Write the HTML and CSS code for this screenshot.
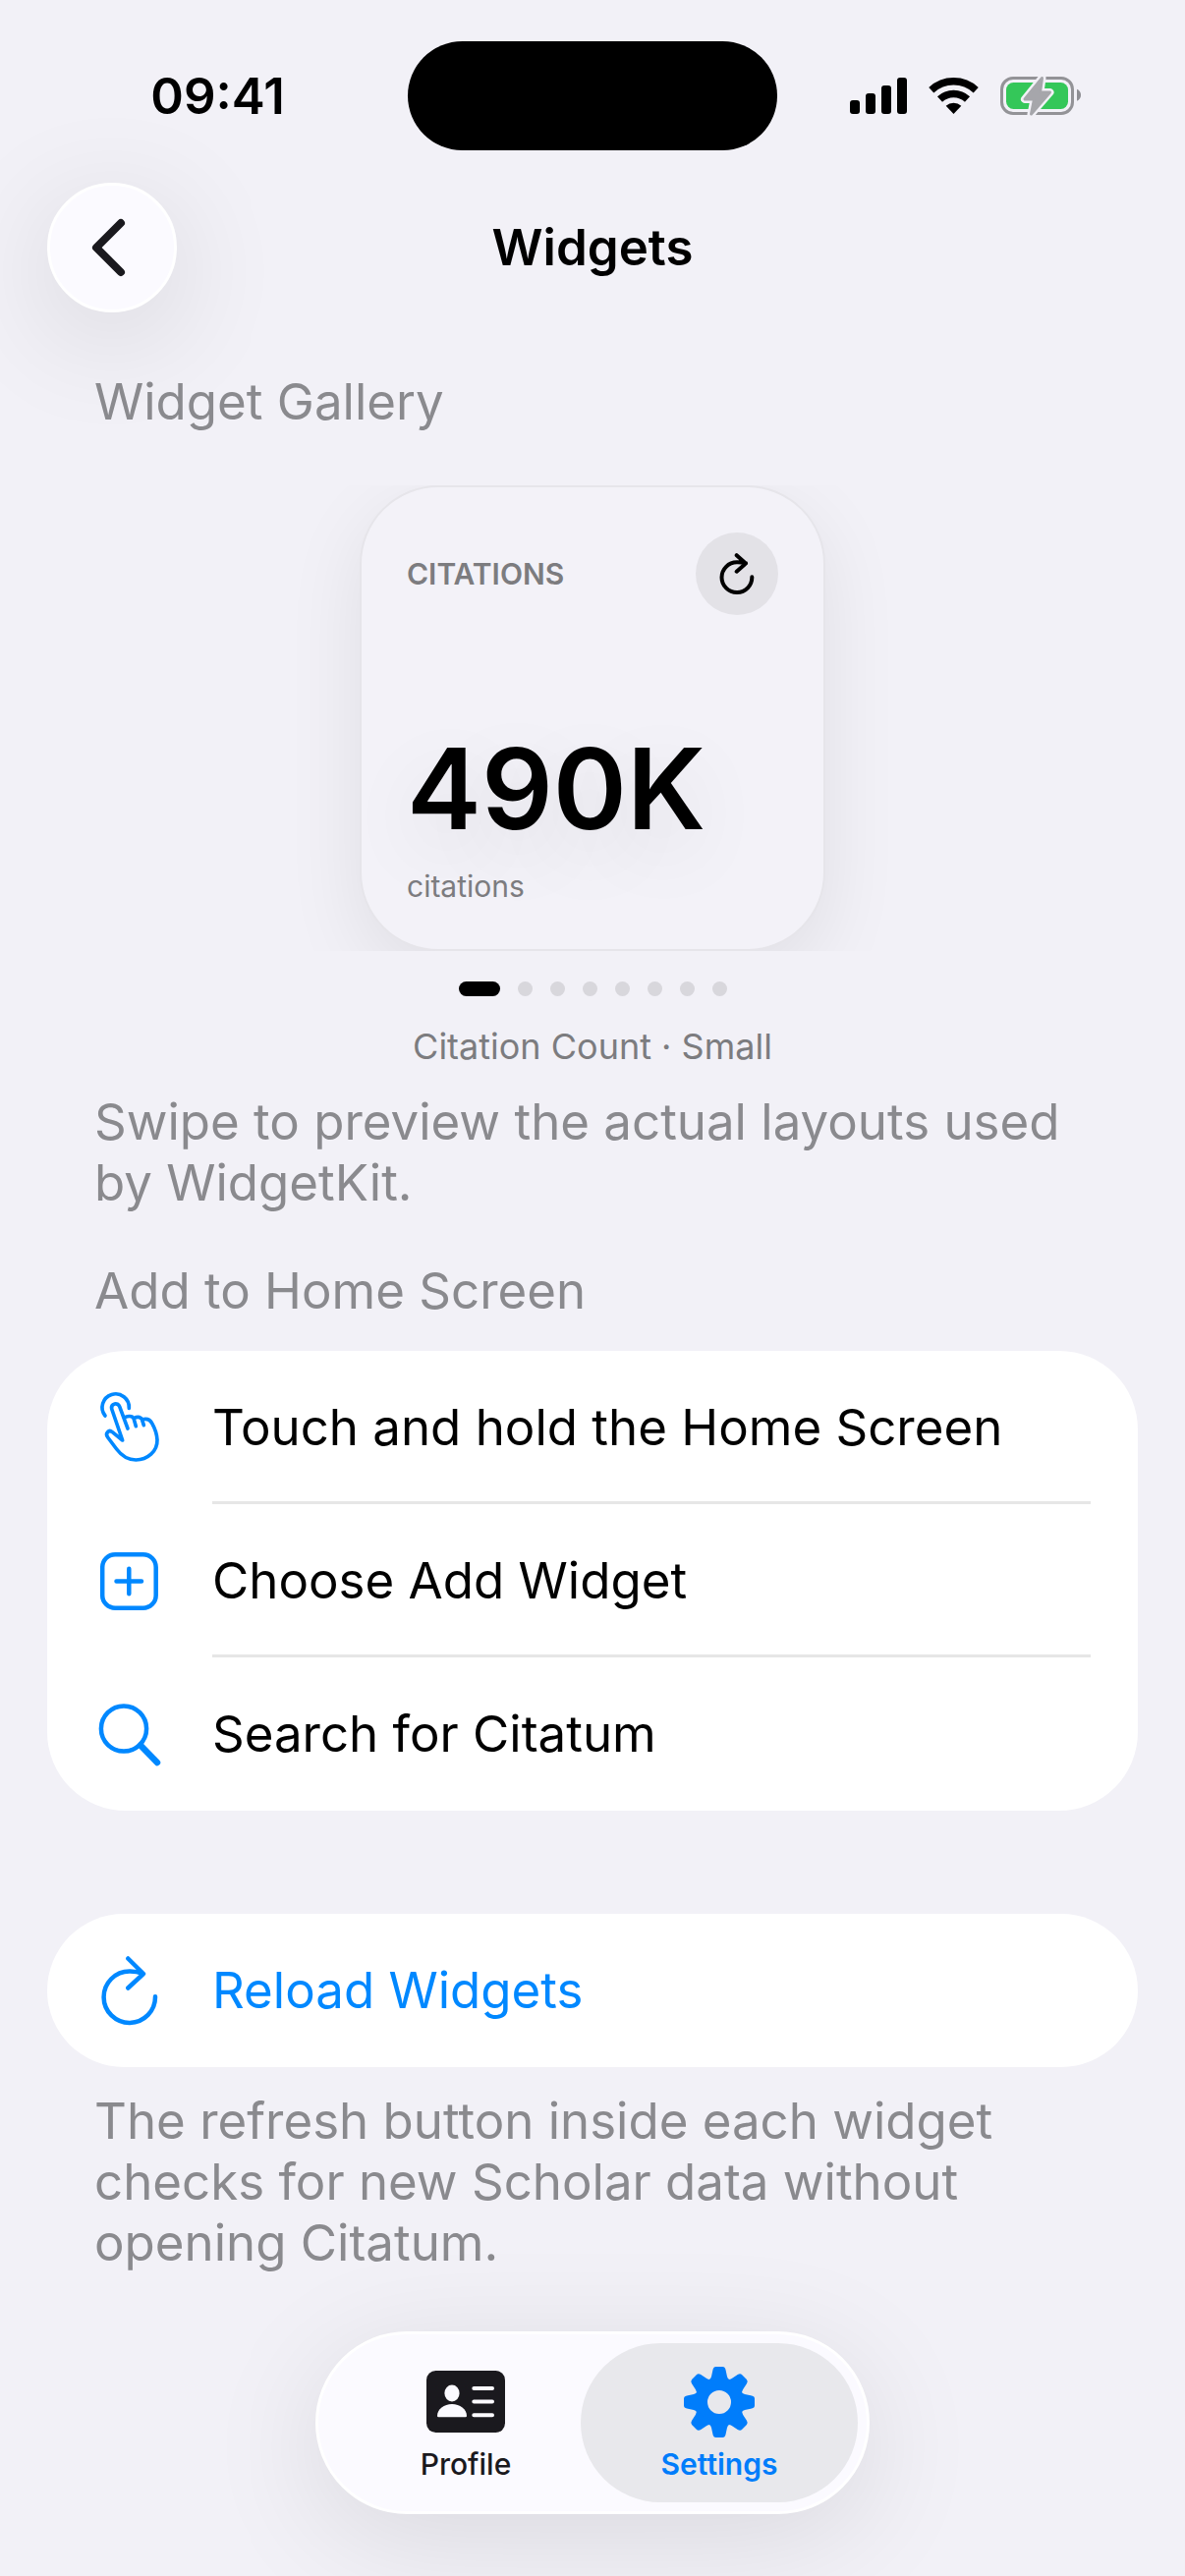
FILE: index.html
```html
<!DOCTYPE html>
<html lang="en">
<head>
  <meta charset="UTF-8">
  <meta name="viewport" content="width=device-width, initial-scale=1.0">
  <title>Widgets</title>
  <link rel="stylesheet" href="styles.css">
</head>
<body>
  <div class="status-bar">
    <div class="time">09:41</div>
    <div class="island"></div>
    <div class="status-icons">
      <svg width="58" height="37" viewBox="0 0 58 37" aria-hidden="true">
        <rect x="0" y="23" width="10" height="14" rx="3"/>
        <rect x="16" y="16" width="10" height="21" rx="3"/>
        <rect x="32" y="8" width="10" height="29" rx="3"/>
        <rect x="48" y="0" width="10" height="37" rx="3"/>
      </svg>
      <svg width="51" height="37" viewBox="0 0 51 37" aria-hidden="true">
        <path d="M2.8 12.7A33.3 33.3 0 0 1 48.2 12.7M11.5 22A20.5 20.5 0 0 1 39.5 22" fill="none" stroke="#000" stroke-width="7.4"/>
        <path d="M25.5 37L17.7 28.8A11.5 11.5 0 0 1 33.3 28.8Z"/>
      </svg>
      <svg width="82" height="42" viewBox="0 0 82 42" aria-hidden="true">
        <rect x="1.5" y="2.5" width="72" height="36" rx="11.5" fill="none" stroke="#939397" stroke-width="3"/>
        <rect x="6" y="7" width="63" height="27" rx="7.5" fill="#34c759"/>
        <path d="M78 13.7Q82 15.5 82 19.7T78 25.7Z" fill="#8e8e93"/>
        <path class="bolt-gap" d="M42.5 2.5L25 24H34.5L31.5 39L50.5 17H40.5Z"/>
        <path class="bolt" d="M42.5 2.5L25 24H34.5L31.5 39L50.5 17H40.5Z"/>
      </svg>
    </div>
  </div>

  <header class="nav-bar">
    <button class="back" type="button" aria-label="Back">
      <svg width="36" height="60" viewBox="0 0 36 60"><path d="M31 5L6 30L31 55"/></svg>
    </button>
    <h1>Widgets</h1>
  </header>

  <main>
    <section>
      <h2>Widget Gallery</h2>
      <div class="gallery">
        <div class="widget">
          <div class="widget-top">
            <span class="widget-title">CITATIONS</span>
            <button class="refresh" type="button" aria-label="Refresh">
              <svg width="84" height="84" viewBox="0 0 84 84">
                <path d="M57.3 45.3A15.4 15.4 0 1 1 42 30.3Q46 30.2 51 31.3M41.7 23.2L51 31.5L41.7 39.7"/>
              </svg>
            </button>
          </div>
          <div class="widget-count">490K</div>
          <div class="widget-label">citations</div>
        </div>
      </div>
      <div class="dots">
        <span class="dot active"></span>
        <span class="dot"></span>
        <span class="dot"></span>
        <span class="dot"></span>
        <span class="dot"></span>
        <span class="dot"></span>
        <span class="dot"></span>
        <span class="dot"></span>
      </div>
      <p class="caption">Citation Count · Small</p>
      <p class="note">Swipe to preview the actual layouts used by WidgetKit.</p>
    </section>

    <section class="steps">
      <h2>Add to Home Screen</h2>
      <ul class="card">
        <li class="row">
          <svg class="icon" viewBox="6 27 234 234" aria-hidden="true">
            <g stroke-width="11">
              <path d="M51 108A41 41 0 1 1 124 85"/>
              <path d="M120 147L95 80C90 66 68 70 71 87L104 183L73 158C62 149 50 162 59 174L86 210C104 234 124 243 145 243C180 243 211 217 210 182C209 164 203 147 194 131C188 119 177 116 165 119"/>
              <path d="M111 113C127 106 137 110 139 119L145 140M139 116C152 109 162 113 164 121L169 137"/>
            </g>
          </svg>
          <span class="row-text">Touch and hold the Home Screen</span>
        </li>
        <li class="row">
          <svg class="icon" viewBox="0 0 78 78" aria-hidden="true">
            <rect x="12.2" y="12.2" width="54.5" height="54.5" rx="13" stroke-width="4.5"/>
            <path d="M26.5 39.5H52M39.3 26.8V52.3" stroke-width="4.5"/>
          </svg>
          <span class="row-text">Choose Add Widget</span>
        </li>
        <li class="row">
          <svg class="icon" viewBox="0 0 78 78" aria-hidden="true">
            <circle cx="34" cy="33.5" r="23.1" stroke-width="4.5"/>
            <path d="M51 50.5L68 68" stroke-width="6.5"/>
          </svg>
          <span class="row-text">Search for Citatum</span>
        </li>
      </ul>
    </section>

    <section class="reload">
      <div class="card">
        <button class="row reload-button" type="button">
          <svg class="icon" viewBox="0 0 78 78" aria-hidden="true">
            <path d="M66 45.2A26.2 26.2 0 1 1 39.8 19.5Q47 19.4 53.5 22M38.3 6.5L54 22L38.3 36.5" stroke-width="4.5"/>
          </svg>
          <span class="row-text">Reload Widgets</span>
        </button>
      </div>
      <p class="note">The refresh button inside each widget checks for new Scholar data without opening Citatum.</p>
    </section>
  </main>

  <nav class="tab-bar">
    <a class="tab" href="#profile">
      <svg width="80" height="72" viewBox="0 -4 80 72" aria-hidden="true">
        <rect width="80" height="63" rx="9.5" fill="#1a191e"/>
        <g fill="#fbfaff">
          <ellipse cx="26" cy="23" rx="7.6" ry="8.5"/>
          <path d="M11 46C11 39 18 34 26 34S41 39 41 46Q41 47.3 39.7 47.3H12.3Q11 47.3 11 46Z"/>
        </g>
        <path d="M48.3 18H67M48.3 31.5H67M48.3 45.3H67" stroke="#fbfaff" stroke-width="4" stroke-linecap="round"/>
      </svg>
      <span>Profile</span>
    </a>
    <a class="tab current" href="#settings" aria-current="page">
      <svg width="72" height="72" viewBox="0 0 72 72" fill="currentColor" aria-hidden="true">
        <defs>
          <path id="tooth" d="M25 14Q27.5 12.5 28 10L29.5 3Q30.2 0 32.5 0H39.5Q41.8 0 42.5 3L44 10Q44.5 12.5 47 14Z"/>
        </defs>
        <circle cx="36" cy="36" r="18.5" fill="none" stroke="currentColor" stroke-width="13"/>
        <use href="#tooth"/>
        <use href="#tooth" transform="rotate(45 36 36)"/>
        <use href="#tooth" transform="rotate(90 36 36)"/>
        <use href="#tooth" transform="rotate(135 36 36)"/>
        <use href="#tooth" transform="rotate(180 36 36)"/>
        <use href="#tooth" transform="rotate(225 36 36)"/>
        <use href="#tooth" transform="rotate(270 36 36)"/>
        <use href="#tooth" transform="rotate(315 36 36)"/>
      </svg>
      <span>Settings</span>
    </a>
  </nav>
</body>
</html>
```
FILE: styles.css
```css
* {
  box-sizing: border-box;
}

body {
  display: flex;
  flex-direction: column;
  min-height: 100vh;
  margin: 0;
  background-color: #f2f1f7;
  color: #000;
  font-family: Inter, "Liberation Sans", sans-serif;
  font-size: 51px;
  line-height: 62px;
}

h1,
h2,
p,
ul {
  margin: 0;
  padding: 0;
  font-size: inherit;
}

button {
  border: none;
  padding: 0;
  font: inherit;
  cursor: pointer;
}

svg {
  display: block;
}

/* status bar */
.status-bar {
  display: grid;
  grid-template-columns: 1fr 376px 1fr;
  align-items: center;
  padding: 42px 0 33px;
}

.time {
  padding-left: 28px;
  font-weight: 600;
  text-align: center;
}

.island {
  height: 111px;
  border-radius: 60px;
  background-color: #000;
}

.status-icons {
  display: flex;
  align-items: center;
  justify-content: center;
  gap: 22px;
  padding-right: 32px;
}

.bolt-gap {
  fill: #f2f1f7;
  stroke: #f2f1f7;
  stroke-width: 8;
  stroke-linejoin: round;
}

.bolt {
  fill: #a6a6ab;
  stroke: #a6a6ab;
  stroke-width: 3;
  stroke-linejoin: round;
}

/* title row */
.nav-bar {
  display: grid;
  grid-template-columns: 132px 1fr 132px;
  align-items: center;
  padding: 0 48px;
}

.nav-bar h1 {
  font-weight: 600;
  text-align: center;
}

.back {
  display: flex;
  align-items: center;
  justify-content: center;
  height: 132px;
  border: 3px solid #fff;
  border-radius: 50%;
  background-color: #fbfaff;
  box-shadow: 0 24px 120px rgba(0, 0, 0, 0.12);
}

.back svg {
  margin-right: 8px;
  fill: none;
  stroke: #1a191e;
  stroke-width: 8;
  stroke-linecap: round;
  stroke-linejoin: round;
}

/* content */
main {
  padding: 60px 48px 0;
}

h2,
.note {
  padding: 0 48px;
  color: #8a8a8e;
  font-weight: 400;
}

.note {
  margin-top: 24px;
}

/* clips the widget shadow at the top and bottom */
.gallery {
  display: flex;
  justify-content: center;
  margin-top: 54px;
  overflow: hidden;
}

.widget {
  display: flex;
  flex-direction: column;
  width: 474px;
  height: 474px;
  padding: 46px;
  border: 2px solid #e6e5ea;
  border-radius: 80px;
  background-color: #f3f2f8;
  box-shadow: 0 24px 80px rgba(0, 0, 0, 0.08);
}

.widget-top {
  display: flex;
  align-items: center;
  justify-content: space-between;
  margin-bottom: auto;
}

.widget-title,
.widget-label {
  color: #7c7c7f;
  font-size: 30px;
  line-height: 36px;
}

.widget-title {
  font-weight: 600;
}

.refresh {
  border-radius: 50%;
  background-color: #e3e2e7;
}

.refresh path {
  fill: none;
  stroke: #000;
  stroke-width: 4;
  stroke-linecap: round;
  stroke-linejoin: round;
}

.widget-count {
  margin-bottom: 12px;
  font-size: 114px;
  font-weight: 600;
  line-height: 138px;
  text-shadow: 0 24px 80px rgba(0, 0, 0, 0.1);
}

.dots {
  display: flex;
  justify-content: center;
  gap: 18px;
  margin-top: 31px;
}

.dot {
  width: 15px;
  height: 15px;
  border-radius: 8px;
  background-color: #d8d7dc;
}

.dot.active {
  width: 42px;
  background-color: #000;
}

.caption {
  margin-top: 29px;
  color: #7c7c7f;
  font-size: 36px;
  line-height: 44px;
  text-align: center;
}

.steps {
  margin-top: 48px;
}

.card {
  border-radius: 80px;
  background-color: #fff;
  list-style: none;
  overflow: hidden;
}

.steps .card {
  margin-top: 30px;
}

.row {
  display: flex;
  align-items: center;
  width: 100%;
  height: 156px;
  padding: 0 48px 0 44px;
}

.icon {
  flex: none;
  width: 78px;
  height: 78px;
  margin-right: 46px;
  fill: none;
  stroke: #0088ff;
  stroke-linecap: round;
  stroke-linejoin: round;
}

.row-text {
  flex: 1;
  padding: 47px 0;
}

.row:not(:last-child) .row-text {
  padding-bottom: 44px;
  border-bottom: 3px solid #e6e6e6;
}

.reload {
  margin-top: 105px;
}

.reload-button {
  background: none;
  color: #0088ff;
  text-align: left;
}

/* tab bar */
.tab-bar {
  display: flex;
  align-self: center;
  margin-top: auto;
  margin-bottom: 63px;
  padding: 9px;
  border: 3px solid #fff;
  border-radius: 96px;
  background-color: #fbfaff;
  box-shadow: 0 24px 120px rgba(0, 0, 0, 0.1);
}

.tab {
  display: flex;
  flex-direction: column;
  align-items: center;
  gap: 9px;
  width: 282px;
  height: 162px;
  padding-top: 24px;
  border-radius: 84px;
  color: #1a191e;
  font-size: 30px;
  font-weight: 500;
  line-height: 36px;
  text-decoration: none;
}

.tab + .tab {
  margin-left: -24px;
}

.tab.current {
  background-color: #e8e8ec;
  color: #007dfb;
  font-weight: 600;
}
```
